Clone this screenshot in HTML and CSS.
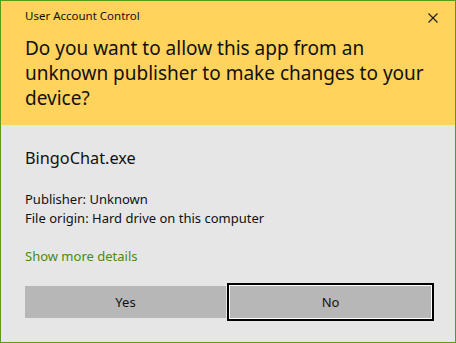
FILE: index.html
```html
<!DOCTYPE html>
<html>
<head>
<meta charset="utf-8">
<link rel="stylesheet" href="styles.css">
</head>
<body>
<div class="dialog">
  <div class="header">
    <div class="titlebar">
      <span class="title">User Account Control</span>
      <svg class="close" width="10" height="10" viewBox="0 0 10 10"><path d="M0.5 0.5 L9.5 9.5 M9.5 0.5 L0.5 9.5" stroke="#1a1a1a" stroke-width="1.1" fill="none"/></svg>
    </div>
    <div class="question">Do you want to allow this app from an unknown publisher to make changes to your device?</div>
  </div>
  <div class="body">
    <div class="appname">BingoChat.exe</div>
    <div class="info">
      <div>Publisher: Unknown</div>
      <div>File origin: Hard drive on this computer</div>
    </div>
    <div class="more">Show more details</div>
    <div class="buttons">
      <div class="btn">Yes</div>
      <div class="btn focused">No</div>
    </div>
  </div>
</div>
</body>
</html>
```
FILE: styles.css
```css
* { box-sizing: border-box; }
html, body { margin: 0; padding: 0; }
body { font-family: "Noto Sans", "Open Sans", sans-serif; color: #000; background: #e6e6e6; }
.dialog {
  width: 456px;
  height: 343px;
  border: 1px solid #5a9a1e;
  display: flex;
  flex-direction: column;
}
.header {
  background: #ffd35c;
  height: 124px;
  padding: 0 24px;
}
.titlebar {
  display: flex;
  justify-content: space-between;
  align-items: center;
  padding-top: 7px;
  height: 23px;
}
.title { font-size: 11.5px; line-height: 16px; color: #111; }
.close { margin-right: -7px; margin-top: 4px; }
.question {
  margin-top: 12px;
  font-size: 19px;
  line-height: 25px;
  color: #111;
}
.body {
  flex: 1;
  background: #e6e6e6;
  padding: 23px 24px 24px;
}
.appname { font-size: 16.3px; line-height: 20px; color: #111; }
.info { margin-top: 22px; font-size: 13px; line-height: 19px; color: #111; }
.more { margin-top: 19px; font-size: 13px; line-height: 19px; color: #4a8a10; }
.buttons { margin-top: 20px; display: flex; gap: 4px; }
.btn {
  width: 201px;
  height: 32px;
  background: #b7b7b7;
  display: flex;
  align-items: center;
  justify-content: center;
  font-size: 13px;
  color: #111;
}
.btn.focused { box-shadow: 0 0 0 1px #fff, 0 0 0 3px #000; }
```
